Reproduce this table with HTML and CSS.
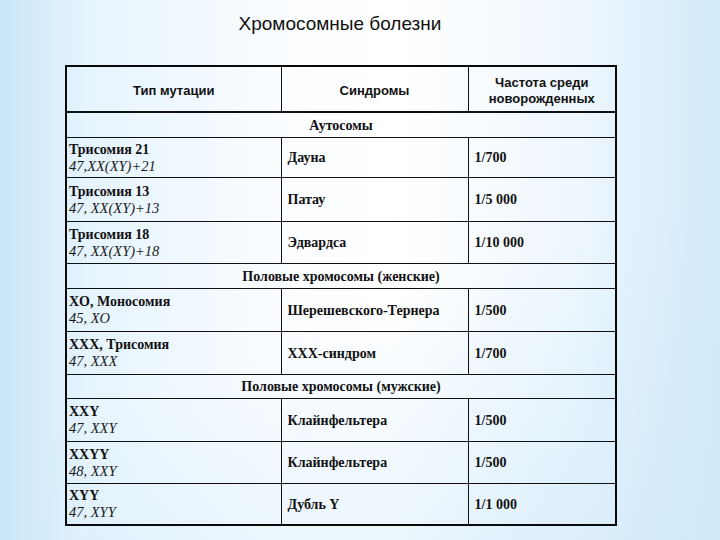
FILE: index.html
```html
<!DOCTYPE html>
<html lang="ru">
<head>
<meta charset="utf-8">
<title>Хромосомные болезни</title>
<link rel="stylesheet" href="styles.css">
</head>
<body>
<div class="page">
  <h1 class="title">Хромосомные болезни</h1>
  <table class="grid">
    <colgroup>
      <col class="c1"><col class="c2"><col class="c3">
    </colgroup>
    <tr class="head">
      <th>Тип мутации</th>
      <th>Синдромы</th>
      <th>Частота среди<br>новорожденных</th>
    </tr>
    <tr class="sect"><td colspan="3">Аутосомы</td></tr>
    <tr class="r40">
      <td class="type">Трисомия 21<br><i>47,XX(XY)+21</i></td>
      <td class="syn">Дауна</td>
      <td class="freq">1/700</td>
    </tr>
    <tr class="r44">
      <td class="type">Трисомия 13<br><i>47, XX(XY)+13</i></td>
      <td class="syn">Патау</td>
      <td class="freq">1/5 000</td>
    </tr>
    <tr class="r42">
      <td class="type">Трисомия 18<br><i>47, XX(XY)+18</i></td>
      <td class="syn">Эдвардса</td>
      <td class="freq">1/10 000</td>
    </tr>
    <tr class="sect"><td colspan="3">Половые хромосомы (женские)</td></tr>
    <tr class="r43">
      <td class="type">XO, Моносомия<br><i>45, XO</i></td>
      <td class="syn">Шерешевского-Тернера</td>
      <td class="freq">1/500</td>
    </tr>
    <tr class="r43">
      <td class="type">XXX, Трисомия<br><i>47, XXX</i></td>
      <td class="syn">XXX-синдром</td>
      <td class="freq">1/700</td>
    </tr>
    <tr class="sect s24"><td colspan="3">Половые хромосомы (мужские)</td></tr>
    <tr class="r43">
      <td class="type">XXY<br><i>47, XXY</i></td>
      <td class="syn">Клайнфельтера</td>
      <td class="freq">1/500</td>
    </tr>
    <tr class="r42">
      <td class="type">XXYY<br><i>48, XXY</i></td>
      <td class="syn">Клайнфельтера</td>
      <td class="freq">1/500</td>
    </tr>
    <tr class="r42">
      <td class="type">XYY<br><i>47, XYY</i></td>
      <td class="syn">Дубль Y</td>
      <td class="freq">1/1 000</td>
    </tr>
  </table>
</div>
</body>
</html>
```

FILE: styles.css
```css
html, body {
  margin: 0;
  padding: 0;
  width: 720px;
  height: 540px;
  overflow: hidden;
}
body {
  background:
    linear-gradient(160deg, rgba(255,255,255,0) 55%, rgba(205,232,249,0.6) 100%),
    linear-gradient(90deg, #c8e5f8 0%, #e6f4fd 12%, #fbfdff 40%, #ffffff 55%, #eef7fd 80%, #d2eafa 100%);
  color: #111;
}
.page {
  width: 550px;
  margin-left: 65px;
  padding-top: 13px;
}
.title {
  margin: 0;
  font-family: "Liberation Sans", Arial, sans-serif;
  font-weight: normal;
  font-size: 19px;
  line-height: 22px;
  text-align: center;
  color: #111;
}
.grid {
  margin-top: 30px;
  width: 550px;
  border-collapse: collapse;
  table-layout: fixed;
  border: 2px solid #0a0a0a;
  font-family: "Liberation Serif", "Times New Roman", serif;
  font-weight: bold;
  font-size: 14px;
  line-height: 16px;
}
.c1 { width: 215px; }
.c2 { width: 187px; }
.c3 { width: 148px; }
.grid th, .grid td {
  border: 1px solid #111;
  padding: 0;
  vertical-align: middle;
}
.head { height: 46px; }
.head th {
  font-family: "Liberation Sans", Arial, sans-serif;
  font-weight: bold;
  font-size: 13px;
  line-height: 16px;
  text-align: center;
  border-bottom: 2px solid #111;
  padding-top: 3px;
}
.sect { height: 25px; }
.s24 { height: 24px; }
.sect td {
  text-align: center;
  padding-top: 2px;
}
.r40 { height: 40px; }
.r42 { height: 42px; }
.r43 { height: 43px; }
.r44 { height: 44px; }
.type {
  padding-left: 2px !important;
  padding-top: 2px !important;
}
.type i {
  font-weight: normal;
  font-style: italic;
  font-size: 14.5px;
  color: #1a1a1a;
}
.syn, .freq {
  padding-left: 6px !important;
  padding-top: 2px !important;
}
```
